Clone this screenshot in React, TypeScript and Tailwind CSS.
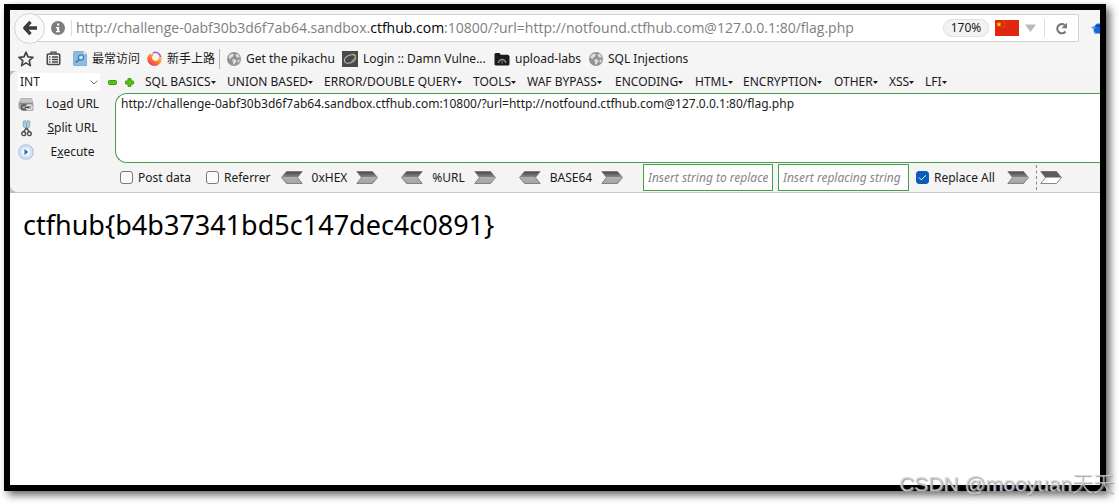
import { useId, type ReactNode } from "react";
import clsx from "clsx";

const MENUS = [
  { label: "SQL BASICS", width: "w-[82px]" },
  { label: "UNION BASED", width: "w-[97px]" },
  { label: "ERROR/DOUBLE QUERY", width: "w-[149px]" },
  { label: "TOOLS", width: "w-[54px]" },
  { label: "WAF BYPASS", width: "w-[88px]" },
  { label: "ENCODING", width: "w-[80px]" },
  { label: "HTML", width: "w-[48px]" },
  { label: "ENCRYPTION", width: "w-[91px]" },
  { label: "OTHER", width: "w-[55px]" },
  { label: "XSS", width: "w-[36px]" },
  { label: "LFI", width: "w-[36px]" },
];

const REQUEST_URL =
  "http://challenge-0abf30b3d6f7ab64.sandbox.ctfhub.com:10800/?url=http://notfound.ctfhub.com@127.0.0.1:80/flag.php";

/* ICONS */

function BackIcon() {
  return (
    <svg width="16" height="16" viewBox="0 0 16 16" fill="none" stroke="#3c3c3c" strokeWidth="3.4">
      <path d="M8.500 1.800 2.800 8l5.700 6.200M3 8h12" strokeLinejoin="round" />
    </svg>
  );
}

function InfoIcon() {
  return (
    <svg width="14" height="14" viewBox="0 0 14 14">
      <circle cx="7" cy="7" r="7" fill="#7d7d7d" />
      <path d="M6 2.500h2.200v2H6zM5 6h3.200v4H9v1.300H5V10h1V7.300H5z" fill="#fff" />
    </svg>
  );
}

function StarIcon() {
  return (
    <svg width="16" height="16" viewBox="0 0 16 16" fill="none" stroke="#464646" strokeWidth="1.700" strokeLinejoin="round">
      <path d="m8 1.200 2 4.700 5 .4-3.800 3.300 1.200 5L8 11.900l-4.400 2.700 1.200-5L1 6.300l5-.4z" />
    </svg>
  );
}

function LibraryIcon() {
  return (
    <svg width="15" height="15" viewBox="0 0 15 15" fill="none" stroke="#464646" strokeWidth="1.600">
      <rect x="1.300" y="3" width="12.400" height="10.500" rx="1" />
      <path d="M5 3V1.200h5V3M3.200 6h1.300M6 6h6M3.200 8.500h1.300M6 8.500h6M3.200 11h1.300M6 11h6" strokeWidth="1.300" />
    </svg>
  );
}

function MostVisitedIcon() {
  return (
    <svg width="14" height="15" viewBox="0 0 14 15">
      <path d="M1 .5h9.500L13.500 3v11.500H1A1 1 0 0 1 .5 14V1z" fill="#8dbddd" stroke="#7fb2d6" />
      <path d="M10.500.5 13.500 3h-3z" fill="#dcecf6" />
      <circle cx="8" cy="6.500" r="2.600" fill="#c5e0f2" stroke="#3f7cab" strokeWidth="1.200" />
      <path d="m6 8.500-3.200 3.200" stroke="#3f7cab" strokeWidth="1.700" />
    </svg>
  );
}

function FirefoxIcon() {
  return (
    <svg width="15" height="15" viewBox="0 0 15 15">
      <defs>
        <linearGradient id="fx" x1="1" y1="0" x2="0.200" y2="1">
          <stop offset="0" stopColor="#b04ee0" />
          <stop offset="0.250" stopColor="#ffc23a" />
          <stop offset="0.600" stopColor="#ff7b2e" />
          <stop offset="1" stopColor="#ef2d5b" />
        </linearGradient>
      </defs>
      <path d="M2.500 2.500 4 3.500 5.500 2l1.500 1.200C5.500 4.500 4.800 6 5.200 7.500c.6 2 3.300 2.900 5.300 1.700 2.300-1.400 2.300-5-.5-7.400 3 1 5 3.500 4.800 6.300A7.200 7.200 0 0 1 7.500 15 7.200 7.200 0 0 1 .3 8C.3 5.800 1.500 4.500 2.500 2.500z" fill="url(#fx)" />
      <path d="M6 1.800C9 .3 13 2 13.700 6" fill="none" stroke="#9a5be6" strokeWidth="1.400" />
    </svg>
  );
}

function GlobeIcon() {
  return (
    <svg width="14" height="14" viewBox="0 0 14 14">
      <circle cx="7" cy="7" r="7" fill="#929292" />
      <path d="M2 3.500 5 1.500l2 1-1 2.200-1.500.5-.8 1.800L1.500 6zM8.500 2.500l2.500-.5 1.800 3-1.800.8L9.500 5zM5.500 7l3 .5 1 1.800L7.500 12l-1 1-.8-3zM10.500 8l2.300-.5-.8 2.800-1.200.5z" fill="#dedede" />
    </svg>
  );
}

function DvwaIcon() {
  return (
    <svg width="16" height="16" viewBox="0 0 16 16">
      <path d="M0 0h16v16H0z" fill="#48494d" />
      <ellipse cx="8" cy="8" rx="6" ry="3.800" transform="rotate(-24 8 8)" fill="none" stroke="#b4bcae" strokeWidth="1.100" />
      <path d="M9 3.500c3-.8 5 .2 4.500 2.500-.3 1.500-2 3.200-4 4.300" fill="none" stroke="#8fac52" strokeWidth="1.200" />
    </svg>
  );
}

function UploadLabsIcon() {
  return (
    <svg width="16" height="14" viewBox="0 0 16 14">
      <path d="M1.500 1h4l1.300 1.700H14L15.500 4v8.500L14.500 13.500h-13L.5 12.500V2z" fill="#1b1b1b" />
      <path d="M4.500 11a3.600 3.600 0 0 1 7.200 0" fill="none" stroke="#8f8f8f" strokeWidth="1.500" />
      <path d="M7.400 9h1.400v2.500H7.400z" fill="#6d6d6d" />
    </svg>
  );
}

function FlagIcon() {
  return (
    <svg width="24" height="16" viewBox="0 0 24 16">
      <path d="M0 0h24v16H0z" fill="#de2910" />
      <path d="m4 1.800.7 1.800h1.900L5.100 4.800l.6 1.900L4 5.600 2.300 6.700l.6-1.900-1.500-1.200h1.900z" fill="#ffde00" />
      <path d="M8 1h1v1H8zM9.500 2.700h1v1h-1zM9.500 5h1v1h-1zM8 6.700h1v1H8z" fill="#ee7a0a" />
    </svg>
  );
}

function ReloadIcon() {
  return (
    <svg width="13" height="13" viewBox="0 0 13 13">
      <path d="M10.500 9.500A4.600 4.600 0 1 1 9.700 3" fill="none" stroke="#767676" strokeWidth="2.200" />
      <path d="M12 .8v5.500H6.500z" fill="#767676" />
    </svg>
  );
}

function AddonIcon() {
  return (
    <svg width="9" height="12" viewBox="0 0 9 12">
      <path d="M3.500 4 6 1.500h3v10H4L2.500 9z" fill="#1667d9" />
      <path d="M0 5.500 3 4l1.500 2L3 7.500zM3 9l3 2.500H3z" fill="#5ba0ec" />
      <path d="M6 3h3v1.500H5z" fill="#0b3f97" />
    </svg>
  );
}

function MinusIcon() {
  return (
    <svg width="9" height="9" viewBox="0 0 9 9">
      <rect x="0.500" y="2.500" width="8" height="4" rx="1" fill="#58c312" stroke="#3f9c10" />
    </svg>
  );
}

function PlusIcon() {
  return (
    <svg width="9" height="9" viewBox="0 0 9 9">
      <path d="M3 .6h3V3h2.400v3H6v2.400H3V6H.6V3H3z" fill="#58c312" stroke="#3f9c10" strokeLinejoin="round" />
    </svg>
  );
}

function LoadIcon() {
  return (
    <svg width="16" height="15" viewBox="0 0 16 15">
      <path d="M3 1h11l1.500 7v5L14 14H4L.5 11V6z" fill="#a3a3a3" />
      <path d="M3.500 1.500h10l1 4h-13z" fill="#c6c6c6" />
      <path d="M1 6h14v1.500H1z" fill="#8a8a8a" />
      <rect x="3.500" y="8" width="5.500" height="4.500" rx="2" fill="none" stroke="#555" strokeWidth="1.300" />
      <rect x="8.500" y="8" width="5.500" height="4.500" rx="2" fill="none" stroke="#e0e0e0" strokeWidth="1.300" />
      <path d="M7 10.300h4" stroke="#444" strokeWidth="1.300" />
    </svg>
  );
}

function SplitIcon() {
  return (
    <svg width="11" height="17" viewBox="0 0 11 17">
      <path d="M2 1.500 4.500.5l1 3V9L2.500 7zM9 1.500 6.500.5l-1 3V9l3-2z" fill="#a9cede" stroke="#7fa3b4" strokeWidth=".8" />
      <path d="m5.500 8-3 4M5.500 8l3 4" stroke="#555" strokeWidth="1.500" />
      <circle cx="2.700" cy="13.700" r="1.900" fill="none" stroke="#4c4c4c" strokeWidth="1.400" />
      <circle cx="8.300" cy="13.700" r="1.900" fill="none" stroke="#4c4c4c" strokeWidth="1.400" />
    </svg>
  );
}

function ExecuteIcon() {
  return (
    <svg width="16" height="16" viewBox="0 0 16 16">
      <circle cx="8" cy="8" r="7.200" fill="#dfe9f6" stroke="#a9c3e5" strokeWidth="1.200" />
      <circle cx="8" cy="8" r="5" fill="#f4f8fd" stroke="#c3d6ee" />
      <path d="m6.500 4.800 3.700 3.200-3.700 3.200z" fill="#2e6dbd" />
    </svg>
  );
}

function ArrowIcon({ flip, hollow }: { flip?: boolean; hollow?: boolean }) {
  const id = useId();
  return (
    <svg width="22" height="13" viewBox="0 0 22 13" className={clsx(flip && "-scale-x-100")}>
      <defs>
        <linearGradient id={id} x1="0" y1="0" x2="0" y2="1">
          <stop offset="0" stopColor="#454545" />
          <stop offset="0.450" stopColor="#858585" />
          <stop offset="0.500" stopColor="#b0b0b0" />
          <stop offset="1" stopColor="#a4a4a4" />
        </linearGradient>
      </defs>
      <path d="M.8.500h15.700l5 6-5 6H.8l4.700-6z" fill={hollow ? "#fff" : `url(#${id})`} stroke="#7b7b7b" strokeWidth=".9" />
      {hollow && <path d="M.8.500h15.700l4.800 6H5.500z" fill="#5c5c5c" />}
    </svg>
  );
}

/* CONTROLS */

function Bookmark({ icon, className, children }: { icon: ReactNode; className: string; children: ReactNode }) {
  return (
    <a href="#" className={clsx("flex shrink-0 items-center gap-[5px] whitespace-nowrap", className)}>
      {icon}
      {children}
    </a>
  );
}

function Check({ label, className, defaultChecked }: { label: string; className: string; defaultChecked?: boolean }) {
  return (
    <label className={clsx("flex shrink-0 items-center gap-[5px] whitespace-nowrap", className)}>
      <span className="grid place-items-center">
        <input
          type="checkbox"
          defaultChecked={defaultChecked}
          className="peer col-start-1 row-start-1 size-[13px] appearance-none rounded-[3px] border border-[#7a7a7a] bg-[#fafafa] checked:border-[#0a5cb8] checked:bg-[#0a5cb8]"
        />
        <svg
          width="9"
          height="9"
          viewBox="0 0 9 9"
          fill="none"
          stroke="#fff"
          className="pointer-events-none invisible col-start-1 row-start-1 peer-checked:visible"
        >
          <path d="m1 4.500 2.300 2.300L8 2.300" />
        </svg>
      </span>
      {label}
    </label>
  );
}

function Codec({ label, className }: { label: string; className: string }) {
  return (
    <div className={clsx("flex shrink-0 items-center justify-between", className)}>
      <button aria-label={`Decode ${label}`}>
        <ArrowIcon flip />
      </button>
      <span>{label}</span>
      <button aria-label={`Encode ${label}`}>
        <ArrowIcon />
      </button>
    </div>
  );
}

function ActionButton({ icon, children }: { icon: ReactNode; children: ReactNode }) {
  return (
    <button className="flex h-[22px] w-full items-center">
      <span className="flex w-4 justify-center">{icon}</span>
      <span className="flex-1 pl-2.5 text-center">{children}</span>
    </button>
  );
}

/* PAGE */

export default function App() {
  return (
    <div className="flex min-h-screen overflow-hidden bg-white pt-1 pr-[13px] pb-[13px] pl-1 font-['Noto_Sans','Noto_Sans_CJK_SC',sans-serif] text-[12px] leading-4 text-[#1a1a1a]">
      <div className="relative flex min-w-0 flex-1 flex-col border-[6px] border-black bg-white shadow-[4px_4px_8px_rgba(0,0,0,0.6)]">
        {/* Address bar */}
        <header className="flex h-9 items-center bg-[#f5f5f5] pl-1">
          <button
            aria-label="Back"
            className="z-10 flex size-[31px] shrink-0 items-center justify-center rounded-full border border-[#d2d2d2] bg-[#fafafa]"
          >
            <BackIcon />
          </button>
          <div className="-ml-4 flex h-7 min-w-0 flex-1 items-center border border-[#d2d2d2] bg-white pl-[21px]">
            <InfoIcon />
            <span className="ml-1.5 h-4 w-px bg-[#dcdcdc]" />
            <p className="ml-1 min-w-0 flex-1 truncate font-['Open_Sans',sans-serif] text-[14px] leading-5 text-[#7e7e7e]">
              http://challenge-0abf30b3d6f7ab64.sandbox.<span className="text-black">ctfhub.com</span>
              :10800/?url=http://notfound.ctfhub.com@127.0.0.1:80/flag.php
            </p>
            <button className="h-[18px] w-[46px] rounded-full border border-[#e0e0e0] bg-[#f2f2f2] text-center text-[12px] leading-4">
              170%
            </button>
            <span className="ml-1.5">
              <FlagIcon />
            </span>
            <button aria-label="Show history" className="ml-1.5">
              <svg width="11" height="8" viewBox="0 0 11 8">
                <path d="M0 .5h11L5.500 8z" fill="#b9b9b9" />
              </svg>
            </button>
            <span className="ml-2 h-[18px] w-px bg-[#dcdcdc]" />
            <button aria-label="Reload" className="mr-2.5 ml-2.5">
              <ReloadIcon />
            </button>
          </div>
          <span className="ml-3">
            <AddonIcon />
          </span>
        </header>

        {/* Bookmarks */}
        <nav className="flex h-[25px] items-center overflow-hidden bg-[#f5f5f5] pl-2">
          <button aria-label="Bookmark this page" className="w-7 shrink-0">
            <StarIcon />
          </button>
          <button aria-label="Library" className="w-[27px] shrink-0">
            <LibraryIcon />
          </button>
          <Bookmark icon={<MostVisitedIcon />} className="w-[74px]">
            最常访问
          </Bookmark>
          <Bookmark icon={<FirefoxIcon />} className="w-[72px]">
            新手上路
          </Bookmark>
          <span className="mr-[7px] h-5 w-px shrink-0 bg-[#b5b5b5]" />
          <Bookmark icon={<GlobeIcon />} className="w-[115px]">
            Get the pikachu
          </Bookmark>
          <Bookmark icon={<DvwaIcon />} className="w-[152px]">
            Login :: Damn Vulne...
          </Bookmark>
          <Bookmark icon={<UploadLabsIcon />} className="w-[95px]">
            upload-labs
          </Bookmark>
          <Bookmark icon={<GlobeIcon />} className="w-[110px]">
            SQL Injections
          </Bookmark>
        </nav>

        {/* HackBar */}
        <section className="bg-[#bdbdbd]">
          <div className="overflow-hidden rounded-l-lg border-b border-[#c8c8c8] bg-[#f4f4f4]">
            <div className="flex h-[22px] items-center pl-2">
              <div className="grid w-[82px] shrink-0 items-center bg-white">
                <select
                  aria-label="Injection type"
                  className="col-start-1 row-start-1 h-[18px] appearance-none bg-transparent pl-0.5"
                >
                  <option>INT</option>
                </select>
                <svg
                  width="8"
                  height="5"
                  viewBox="0 0 8 5"
                  fill="none"
                  stroke="#777"
                  className="pointer-events-none col-start-1 row-start-1 mr-0.5 justify-self-end"
                >
                  <path d="m.5.500 3.500 3.500L7.500.500" />
                </svg>
              </div>
              <button aria-label="Remove" className="ml-2 shrink-0">
                <MinusIcon />
              </button>
              <button aria-label="Add" className="mr-[11px] ml-2 shrink-0">
                <PlusIcon />
              </button>
              {MENUS.map((menu) => (
                <button key={menu.label} className={clsx("flex shrink-0 items-center whitespace-nowrap", menu.width)}>
                  {menu.label}
                  <svg width="5" height="3" viewBox="0 0 5 3">
                    <path d="M0 0h5L2.500 3z" fill="#1a1a1a" />
                  </svg>
                </button>
              ))}
            </div>

            <div className="flex">
              <div className="flex w-[105px] shrink-0 flex-col gap-0.5 pr-3.5 pl-2">
                <ActionButton icon={<LoadIcon />}>
                  Lo<u>a</u>d URL
                </ActionButton>
                <ActionButton icon={<SplitIcon />}>
                  <u>S</u>plit URL
                </ActionButton>
                <ActionButton icon={<ExecuteIcon />}>
                  E<u>x</u>ecute
                </ActionButton>
              </div>

              <div className="min-w-0 flex-1">
                <textarea
                  aria-label="URL"
                  defaultValue={REQUEST_URL}
                  className="block h-[70px] w-full resize-none rounded-l-xl border border-r-0 border-[#43a047] bg-white px-[5px] py-0.5 outline-none"
                />
                <div className="flex h-[29px] items-center pl-[5px]">
                  <Check label="Post data" className="w-[86px]" />
                  <Check label="Referrer" className="w-[75px]" />
                  <Codec label="0xHEX" className="mr-[23px] w-[97px]" />
                  <Codec label="%URL" className="mr-[23px] w-[95px]" />
                  <Codec label="BASE64" className="mr-5 w-[104px]" />
                  <input
                    aria-label="String to replace"
                    placeholder="Insert string to replace"
                    className="mr-[5px] h-[27px] w-[130px] shrink-0 border border-[#43a047] bg-white px-1 italic outline-none placeholder:text-[#858585]"
                  />
                  <input
                    aria-label="Replacing string"
                    placeholder="Insert replacing string"
                    className="mr-[7px] h-[27px] w-[131px] shrink-0 border border-[#43a047] bg-white px-1 italic outline-none placeholder:text-[#858585]"
                  />
                  <Check label="Replace All" className="w-[91px]" defaultChecked />
                  <button aria-label="Replace" className="shrink-0">
                    <ArrowIcon />
                  </button>
                  <span className="mr-[3px] ml-[7px] h-[25px] shrink-0 border-l border-dashed border-[#8a8a8a]" />
                  <button aria-label="Replace back" className="shrink-0">
                    <ArrowIcon hollow />
                  </button>
                </div>
              </div>
            </div>
          </div>
        </section>

        {/* Response body */}
        <main className="flex-1 px-[13px] py-3 text-[27px] leading-10 text-black">ctfhub{"{"}b4b37341bd5c147dec4c0891{"}"}</main>

        <span className="absolute -right-[14px] -bottom-[11px] font-['Liberation_Sans','Noto_Sans_CJK_SC',sans-serif] text-[21px] leading-6 font-light whitespace-nowrap text-[#d4d4d4]/80 [text-shadow:1px_1px_1px_#999]">
          CSDN @mooyuan天天
        </span>
      </div>
    </div>
  );
}
